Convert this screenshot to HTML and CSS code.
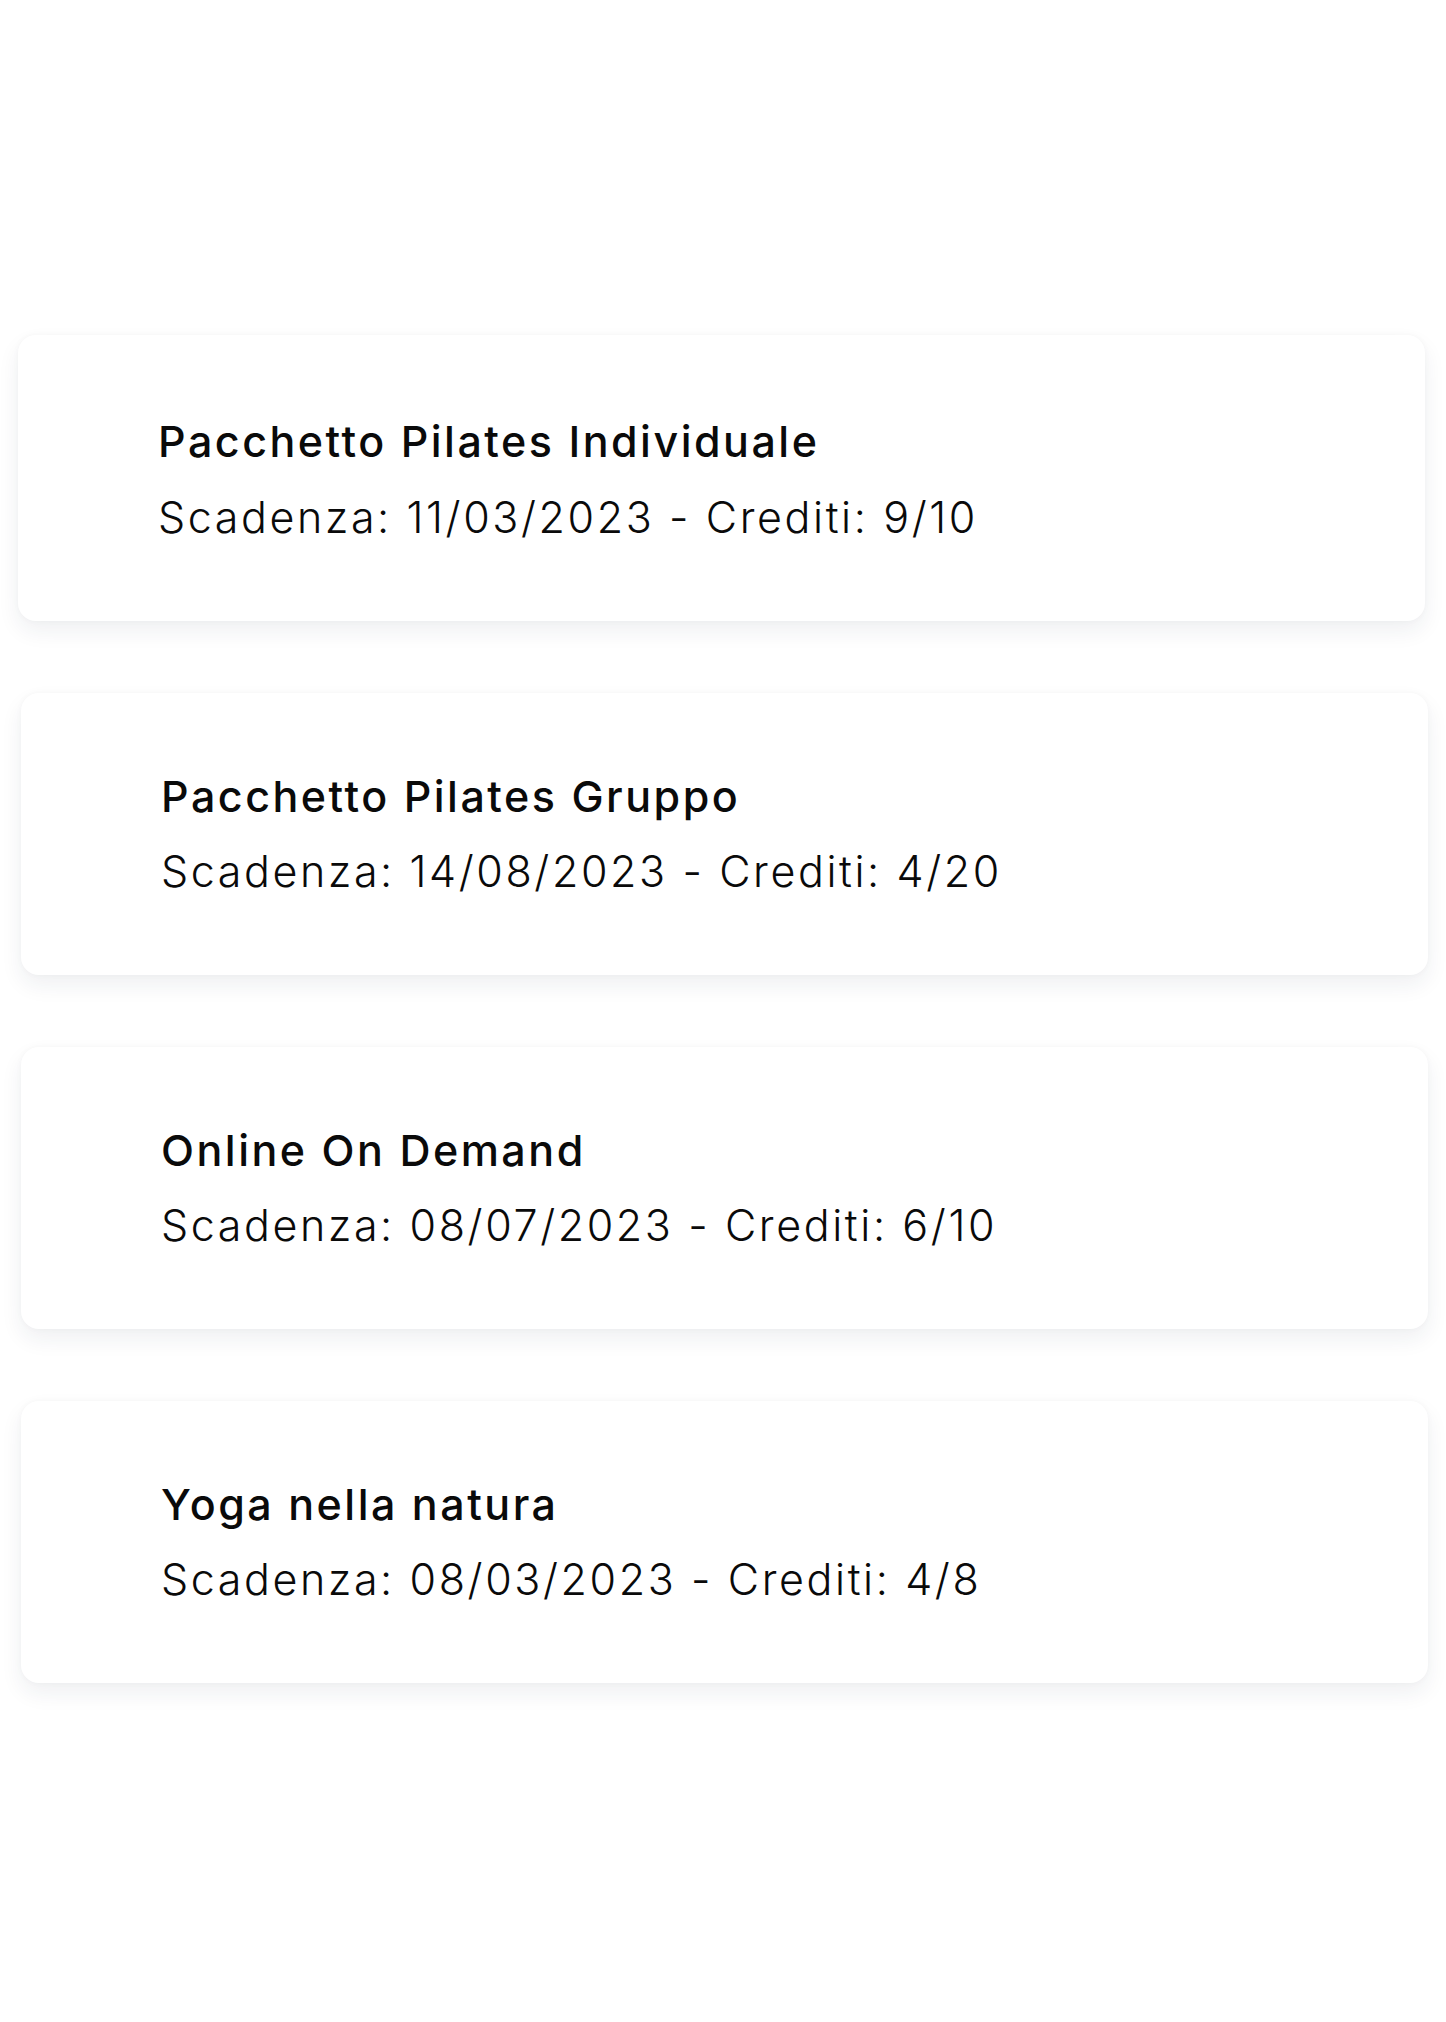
FILE: index.html
```html
<!DOCTYPE html>
<html lang="it">
<head>
<meta charset="utf-8">
<title>Pacchetti</title>
<link rel="stylesheet" href="styles.css">
</head>
<body>
<main class="list">
  <section class="card card-first">
    <h2 class="card-title">Pacchetto Pilates Individuale</h2>
    <p class="card-meta">Scadenza: 11/03/2023 - Crediti: 9/10</p>
  </section>
  <section class="card">
    <h2 class="card-title">Pacchetto Pilates Gruppo</h2>
    <p class="card-meta">Scadenza: 14/08/2023 - Crediti: 4/20</p>
  </section>
  <section class="card">
    <h2 class="card-title">Online On Demand</h2>
    <p class="card-meta">Scadenza: 08/07/2023 - Crediti: 6/10</p>
  </section>
  <section class="card">
    <h2 class="card-title">Yoga nella natura</h2>
    <p class="card-meta">Scadenza: 08/03/2023 - Crediti: 4/8</p>
  </section>
</main>
</body>
</html>
```

FILE: styles.css
```css
html, body {
  margin: 0;
  padding: 0;
  background: #ffffff;
}

body {
  font-family: "Inter", "Noto Sans", "Liberation Sans", sans-serif;
  color: #0a0a0a;
}

.list {
  display: flex;
  flex-direction: column;
  gap: 72px;
  padding: 335px 18px 300px 21px;
}

.card {
  background: #ffffff;
  border-radius: 18px;
  padding: 67px 40px 68px 140px;
  box-shadow: 0 10px 22px rgba(30, 41, 70, 0.07), 0 0 6px rgba(30, 41, 70, 0.03);
}

.card-first {
  margin-left: -3px;
  margin-right: 3px;
  padding-top: 70px;
  padding-bottom: 68px;
}

.card-title {
  margin: 0;
  font-size: 43px;
  font-weight: 500;
  line-height: 72px;
  letter-spacing: 2.5px;
}

.card-meta {
  margin: 3px 0 0;
  font-size: 43px;
  font-weight: 300;
  line-height: 72px;
  letter-spacing: 2.6px;
}

.card-first .card-meta {
  margin-top: 4px;
}
```
